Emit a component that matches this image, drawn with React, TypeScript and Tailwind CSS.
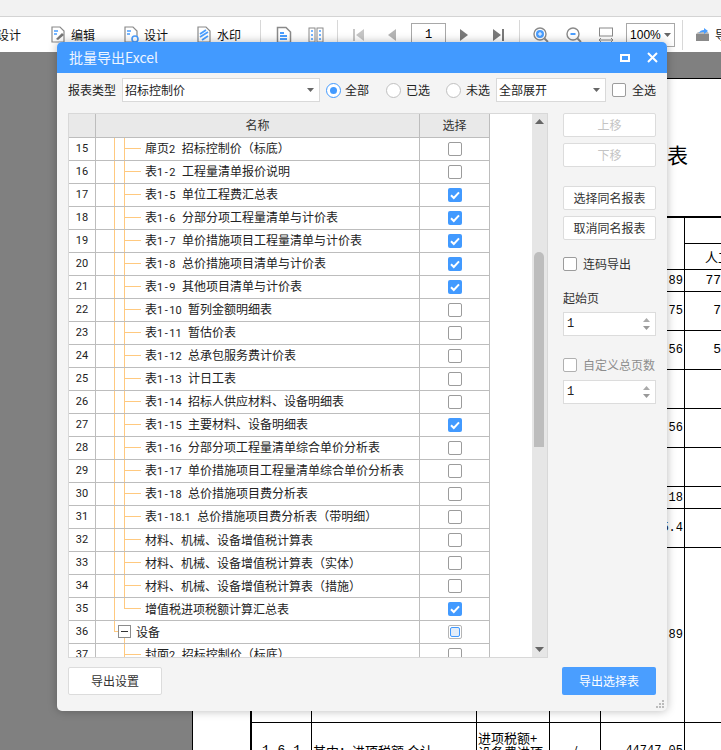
import React from "react";

function Mixed({ text }: { text: string }) {
  const parts = text.split(/([A-Za-z0-9.\-])/).filter(Boolean);
  return (
    <>
      {parts.map((p, i) =>
        p === "-" ? (
          <span key={i} className="inline-block w-[6px] text-center font-['Roboto',sans-serif] text-[11px]">-</span>
        ) : /^[A-Za-z0-9.]$/.test(p) ? (
          <span key={i} className="font-['Roboto',sans-serif] text-[11px]">{p}</span>
        ) : (
          <span key={i}>{p}</span>
        )
      )}
    </>
  );
}

function Check({ state = "off", disabled = false }: { state?: "off" | "on" | "mixed"; disabled?: boolean }) {
  if (state === "on")
    return (
      <div className="w-[14px] h-[14px] rounded-[2px] bg-[#429aff] flex items-center justify-center shrink-0">
        <svg width="12" height="12" viewBox="0 0 12 12"><path d="M2 6.2 L4.8 9 L10 3.4" fill="none" stroke="#fff" strokeWidth="2" /></svg>
      </div>
    );
  if (state === "mixed")
    return (
      <div className="w-[14px] h-[14px] rounded-[2px] border border-[#b5b5b5] bg-white flex items-center justify-center shrink-0">
        <div className="w-[10px] h-[10px] rounded-[2px] border border-[#429aff] bg-[#e3edf9]" />
      </div>
    );
  return <div className={`w-[14px] h-[14px] rounded-[2px] border bg-white shrink-0 ${disabled ? "border-[#b0b0b0]" : "border-[#9c9c9c]"}`} />;
}

function Radio({ on = false }: { on?: boolean }) {
  return (
    <div className={`w-[15px] h-[15px] rounded-full border flex items-center justify-center bg-white shrink-0 ${on ? "border-[#429aff]" : "border-[#c0c0c0]"}`}>
      {on && <div className="w-[7px] h-[7px] rounded-full bg-[#429aff]" />}
    </div>
  );
}

function Caret() {
  return <svg width="7" height="4" viewBox="0 0 7 4" className="shrink-0"><path d="M0 0 H7 L3.5 4 Z" fill="#666" /></svg>;
}

function Select({ w, text }: { w: string; text: string }) {
  return (
    <div className={`${w} h-[24px] border border-[#d9d9d9] bg-white flex items-center justify-between pl-[2px] pr-[5px] text-[12px] text-[#222]`}>
      <span>{text}</span>
      <Caret />
    </div>
  );
}

function Btn({ children, disabled = false }: { children: React.ReactNode; disabled?: boolean }) {
  return (
    <div className={`w-[93px] h-[24px] rounded-[2px] border border-[#dcdcdc] bg-white flex items-center justify-center text-[12px] ${disabled ? "text-[#c4c4c4]" : "text-[#333]"}`}>
      {children}
    </div>
  );
}

function Spin() {
  return (
    <div className="w-[93px] h-[24px] border border-[#dcdcdc] bg-white flex items-center justify-between pl-[3px] pr-[5px]">
      <span className="font-['Liberation_Mono',monospace] text-[12px] text-[#222]">1</span>
      <div className="flex flex-col gap-[4px]">
        <svg width="7" height="4" viewBox="0 0 7 4"><path d="M0 4 H7 L3.5 0 Z" fill="#aaa" /></svg>
        <svg width="7" height="4" viewBox="0 0 7 4"><path d="M0 0 H7 L3.5 4 Z" fill="#999" /></svg>
      </div>
    </div>
  );
}

type Row = { n: number; pre: string; name: string; c?: "on" | "mixed"; kind?: "last" | "group" | "after" };

const rows: Row[] = [
  { n: 15, pre: "扉页2", name: "招标控制价（标底）" },
  { n: 16, pre: "表1-2", name: "工程量清单报价说明" },
  { n: 17, pre: "表1-5", name: "单位工程费汇总表", c: "on" },
  { n: 18, pre: "表1-6", name: "分部分项工程量清单与计价表", c: "on" },
  { n: 19, pre: "表1-7", name: "单价措施项目工程量清单与计价表", c: "on" },
  { n: 20, pre: "表1-8", name: "总价措施项目清单与计价表", c: "on" },
  { n: 21, pre: "表1-9", name: "其他项目清单与计价表", c: "on" },
  { n: 22, pre: "表1-10", name: "暂列金额明细表" },
  { n: 23, pre: "表1-11", name: "暂估价表" },
  { n: 24, pre: "表1-12", name: "总承包服务费计价表" },
  { n: 25, pre: "表1-13", name: "计日工表" },
  { n: 26, pre: "表1-14", name: "招标人供应材料、设备明细表" },
  { n: 27, pre: "表1-15", name: "主要材料、设备明细表", c: "on" },
  { n: 28, pre: "表1-16", name: "分部分项工程量清单综合单价分析表" },
  { n: 29, pre: "表1-17", name: "单价措施项目工程量清单综合单价分析表" },
  { n: 30, pre: "表1-18", name: "总价措施项目费分析表" },
  { n: 31, pre: "表1-18.1", name: "总价措施项目费分析表（带明细）" },
  { n: 32, pre: "", name: "材料、机械、设备增值税计算表" },
  { n: 33, pre: "", name: "材料、机械、设备增值税计算表（实体）" },
  { n: 34, pre: "", name: "材料、机械、设备增值税计算表（措施）" },
  { n: 35, pre: "", name: "增值税进项税额计算汇总表", c: "on", kind: "last" },
  { n: 36, pre: "", name: "设备", c: "mixed", kind: "group" },
  { n: 37, pre: "封面2", name: "招标控制价（标底）", kind: "after" },
];

function Tree({ kind }: { kind?: Row["kind"] }) {
  if (kind === "group") {
    return (
      <div className="flex items-stretch h-full ml-[18px] shrink-0">
        <div className="w-[4px] shrink-0">
          <div className="h-[11px] border-l border-b border-[#ffc97f]" />
        </div>
        <div className="w-[13px] flex flex-col items-center shrink-0">
          <div className="w-[13px] h-[13px] mt-[4px] border border-[#8c8c8c] bg-white flex items-center justify-center shrink-0">
            <div className="w-[7px] h-px bg-[#333]" />
          </div>
          <div className="w-px flex-1 bg-[#ffc97f]" />
        </div>
      </div>
    );
  }
  return (
    <div className="flex items-stretch h-full ml-[18px] shrink-0">
      <div className={`w-[10px] ${kind === "after" ? "" : "border-l border-[#ffc97f]"}`} />
      <div className="w-[17px] flex flex-col">
        <div className="h-[11px] border-b border-l border-[#ffc97f]" />
        <div className={`flex-1 ${kind === "last" ? "" : "border-l border-[#ffc97f]"}`} />
      </div>
    </div>
  );
}

function ListRow({ r }: { r: Row }) {
  return (
    <div className="flex h-[23px] border-b border-[#bdbdbd] text-[12px] text-[#222] shrink-0">
      <div className="w-[27px] border-r border-[#bdbdbd] flex items-center justify-center font-['Roboto',sans-serif] text-[11px] shrink-0">{r.n}</div>
      <div className="w-[324px] border-r border-[#bdbdbd] flex items-center shrink-0 whitespace-nowrap">
        <Tree kind={r.kind} />
        {r.kind === "group" ? (
          <span className="ml-[5px]">{r.name}</span>
        ) : (
          <span className="ml-[4px] flex gap-[6.5px]">
            {r.pre && <span><Mixed text={r.pre} /></span>}
            <span>{r.name}</span>
          </span>
        )}
      </div>
      <div className="w-[70px] border-r border-[#bdbdbd] flex items-center justify-center shrink-0">
        <Check state={r.c ?? "off"} />
      </div>
    </div>
  );
}

const Doc = ({ d }: { d: string }) => (
  <svg width="16" height="18" viewBox="0 0 16 18" className="shrink-0">
    <path d="M1.5 1.5 H10 L14.5 6 V16.5 H1.5 Z" fill="#fff" stroke="#8a8a8a" strokeWidth="1.5" />
    <path d={d} fill="none" stroke="#4a9eff" strokeWidth="2" />
  </svg>
);

function ToolItem({ icon, label, ml }: { icon: React.ReactNode; label: string; ml: string }) {
  return (
    <div className={`flex items-center gap-[5px] shrink-0 ${ml}`}>
      {icon}
      <span className="text-[12px] text-[#111]">{label}</span>
    </div>
  );
}

const Sep = ({ ml }: { ml: string }) => <div className={`w-px h-[30px] bg-[#d8d8d8] shrink-0 ${ml}`} />;

const cols = ["w-[60px]", "w-[165px]", "w-[73px]", "w-[51px]", "w-[84px]"];

function TableRow({ h, cells, last }: { h: string; cells?: string[]; last?: string }) {
  return (
    <div className={`flex ${h} border-b border-black shrink-0`}>
      {cols.map((c, i) => (
        <div key={i} className={`${c} border-r border-black shrink-0 flex items-center justify-end pr-[1px] font-['Liberation_Mono',monospace] text-[12px] text-black`}>
          {i === 4 && cells?.[0]}
        </div>
      ))}
      <div className="flex-1 flex items-center">
        {last && <span className="w-[36px] text-right font-['Liberation_Mono',monospace] text-[13px] text-black">{last}</span>}
      </div>
    </div>
  );
}

export default function App() {
  return (
    <div className="relative w-[721px] h-[750px] overflow-hidden flex flex-col bg-[#808080] font-['Noto_Sans_CJK_SC',sans-serif]">
      {/* window strip */}
      <div className="h-[17px] bg-[#f2f2f2] border-b border-[#d4d4d4] shrink-0" />
      {/* toolbar */}
      <div className="h-[35px] bg-white flex items-center shrink-0 overflow-hidden">
        <span className="text-[12px] text-[#111] -ml-[3px] w-[24px] shrink-0">设计</span>
        <ToolItem ml="ml-[30px]" label="编辑" icon={
          <svg width="15" height="17" viewBox="0 0 15 17"><path d="M1 1 H9 L13 5 V16 H1 Z" fill="#fff" stroke="#8a8a8a" strokeWidth="1.2" /><path d="M3 5 H7 M3 8 H6" stroke="#4a9eff" strokeWidth="1.5" /><path d="M5 13 L11 7 L13 9 L7 14 Z" fill="#777" /></svg>
        } />
        <ToolItem ml="ml-[29px]" label="设计" icon={
          <svg width="15" height="17" viewBox="0 0 15 17"><path d="M1 1 H9 L13 5 V16 H1 Z" fill="#fff" stroke="#8a8a8a" strokeWidth="1.2" /><path d="M3 5 H7 M3 8 H6" stroke="#4a9eff" strokeWidth="1.5" /><circle cx="11" cy="13" r="3" fill="#fff" stroke="#4a9eff" strokeWidth="1.6" /></svg>
        } />
        <ToolItem ml="ml-[29px]" label="水印" icon={
          <svg width="15" height="17" viewBox="0 0 15 17"><path d="M1 1 H9 L13 5 V16 H1 Z" fill="#fff" stroke="#8a8a8a" strokeWidth="1.2" /><path d="M3 8 L9 4 M3 11 L11 6 M5 14 L11 10" stroke="#4a9eff" strokeWidth="1.8" /></svg>
        } />
        <Sep ml="ml-[19px]" />
        <div className="ml-[15px] shrink-0"><Doc d="M4 7 H8 M4 10 H11 M4 13 H11" /></div>
        <div className="ml-[16px] shrink-0">
          <svg width="16" height="16" viewBox="0 0 16 16"><rect x="1" y="1" width="6" height="14" fill="#fff" stroke="#8a8a8a" /><rect x="9" y="1" width="6" height="14" fill="#fff" stroke="#8a8a8a" /><path d="M3 4 H5 M3 8 H5 M3 12 H5 M11 4 H13 M11 8 H13 M11 12 H13" stroke="#4a9eff" strokeWidth="1.5" /></svg>
        </div>
        <Sep ml="ml-[13px]" />
        <div className="ml-[15px] shrink-0">
          <svg width="11" height="12" viewBox="0 0 11 12"><path d="M0 0 H2 V12 H0 Z M11 0 V12 L3 6 Z" fill="#c6c6c6" /></svg>
        </div>
        <div className="ml-[24px] shrink-0">
          <svg width="8" height="12" viewBox="0 0 8 12"><path d="M8 0 V12 L0 6 Z" fill="#b5b5b5" /></svg>
        </div>
        <div className="ml-[15px] w-[35px] h-[24px] border border-[#a8a8a8] flex items-center justify-center font-['Liberation_Mono',monospace] text-[12px] text-black shrink-0">1</div>
        <div className="ml-[14px] shrink-0">
          <svg width="8" height="12" viewBox="0 0 8 12"><path d="M0 0 V12 L8 6 Z" fill="#7a7a7a" /></svg>
        </div>
        <div className="ml-[25px] shrink-0">
          <svg width="11" height="12" viewBox="0 0 11 12"><path d="M0 0 V12 L8 6 Z M9 0 H11 V12 H9 Z" fill="#7a7a7a" /></svg>
        </div>
        <Sep ml="ml-[15px]" />
        <div className="ml-[13px] shrink-0">
          <svg width="16" height="16" viewBox="0 0 16 16"><circle cx="7" cy="7" r="6" fill="#fff" stroke="#8a8a8a" strokeWidth="1.4" /><circle cx="7" cy="7" r="4" fill="#4a9eff" /><path d="M5 7 H9 M7 5 V9" stroke="#fff" /><path d="M11.5 11.5 L15 15" stroke="#8a8a8a" strokeWidth="1.8" /></svg>
        </div>
        <div className="ml-[17px] shrink-0">
          <svg width="16" height="16" viewBox="0 0 16 16"><circle cx="7" cy="7" r="6" fill="#fff" stroke="#8a8a8a" strokeWidth="1.4" /><path d="M4.5 7 H9.5" stroke="#4a9eff" strokeWidth="2" /><path d="M11.5 11.5 L15 15" stroke="#8a8a8a" strokeWidth="1.8" /></svg>
        </div>
        <div className="ml-[16px] shrink-0">
          <svg width="16" height="16" viewBox="0 0 16 16"><rect x="1.5" y="1" width="13" height="8" fill="#fff" stroke="#8a8a8a" /><path d="M1 13 H15 M3 11 L1 13 L3 15 M13 11 L15 13 L13 15" fill="none" stroke="#8a8a8a" /></svg>
        </div>
        <div className="ml-[12px] w-[49px] h-[24px] border border-[#a8a8a8] flex items-center justify-between px-[3px] shrink-0">
          <span className="font-['Liberation_Sans',sans-serif] text-[12px] text-black">100%</span>
          <Caret />
        </div>
        <Sep ml="ml-[7px]" />
        <ToolItem ml="ml-[12px]" label="导" icon={
          <svg width="15" height="15" viewBox="0 0 15 15"><path d="M1 7 H14 V14 H1 Z" fill="#8a8a8a" /><path d="M1 7 L3 5 H13 L14 7" fill="#bbb" /><path d="M4 6 Q5 3 9 3 V1 L13 4 L9 7 V5 Q6 5 4 6" fill="#4a9eff" /></svg>
        } />
      </div>

      {/* workspace */}
      <div className="flex-1 flex min-h-0">
        <div className="w-[192px] shrink-0" />
        <div className="flex-1 flex flex-col min-w-0">
          <div className="h-[26px] shrink-0" />
          <div className="flex-1 bg-white border-l border-t border-black overflow-hidden">
            <div className="h-[62px] shrink-0" />
            <div className="h-[27px] pl-[474px] text-[21px] leading-[27px] text-black">表</div>
            <div className="h-[48px]" />
            <div className="ml-[57px] w-[620px] flex flex-col border-l-2 border-black">
              <div className="border-t-2 border-black flex h-[54px] border-b border-b-black shrink-0">
                {cols.map((c, i) => <div key={i} className={`${c} border-r border-black shrink-0`} />)}
                <div className="flex-1 flex flex-col">
                  <div className="h-[26px] border-b border-black" />
                  <div className="flex-1 pl-[20px] flex items-center whitespace-nowrap text-[13px] text-black">人工费</div>
                </div>
              </div>
              <TableRow h="h-[22px]" cells={["89"]} last="77" />
              <TableRow h="h-[39px]" cells={["75"]} last="7" />
              <TableRow h="h-[39px]" cells={["56"]} last="5" />
              <TableRow h="h-[39px]" />
              <TableRow h="h-[39px]" cells={["56"]} />
              <TableRow h="h-[39px]" />
              <TableRow h="h-[22px]" cells={["18"]} />
              <TableRow h="h-[39px]" cells={["45.4"]} />
              <TableRow h="h-[175px]" cells={["89"]} />
              <div className="flex h-[56px] text-[13px] leading-[14px] text-black">
                <div className={`${cols[0]} border-r border-black shrink-0 flex items-center justify-center font-['Liberation_Mono',monospace]`}>1.6.1</div>
                <div className={`${cols[1]} border-r border-black shrink-0 flex items-center pl-[1px] whitespace-nowrap`}>其中：进项税额 合计</div>
                <div className={`${cols[2]} border-r border-black shrink-0 pt-[8px] pl-[1px]`}>进项税额+<br />设备费进项</div>
                <div className={`${cols[3]} border-r border-black shrink-0 flex items-center justify-center`}>/</div>
                <div className={`${cols[4]} border-r border-black shrink-0 flex items-center justify-end pr-[1px] font-['Liberation_Mono',monospace] text-[12px]`}>44747.05</div>
              </div>
            </div>
          </div>
        </div>
      </div>

      {/* modal */}
      <div className="absolute left-[57px] top-[42px] w-[610px] h-[669px] rounded-[5px] bg-[#f4f4f4] shadow-[0_0_10px_rgba(0,0,0,0.28)] overflow-hidden flex flex-col">
        <div className="h-[31px] bg-[#429aff] flex items-center justify-between pl-[12px] pr-[9px] shrink-0">
          <span className="text-[14px] text-[#eef5ff]">批量导出Excel</span>
          <div className="flex items-center gap-[17px]">
            <div className="w-[10px] h-[8px] border-2 border-white" />
            <svg width="11" height="11" viewBox="0 0 11 11"><path d="M1 1 L10 10 M10 1 L1 10" stroke="#fff" strokeWidth="2" /></svg>
          </div>
        </div>
        <div className="flex-1 px-[11px] pt-[5px] flex flex-col min-h-0">
          <div className="flex items-center h-[24px] text-[12px] text-[#222] shrink-0">
            <span className="w-[54px] shrink-0">报表类型</span>
            <Select w="w-[198px]" text="招标控制价" />
            <div className="ml-[6px]"><Radio on /></div>
            <span className="ml-[4px]">全部</span>
            <div className="ml-[17px]"><Radio /></div>
            <span className="ml-[5px]">已选</span>
            <div className="ml-[16px]"><Radio /></div>
            <span className="ml-[5px]">未选</span>
            <div className="ml-[6px]"><Select w="w-[110px]" text="全部展开" /></div>
            <div className="ml-[6px]"><Check /></div>
            <span className="ml-[6px]">全选</span>
          </div>

          <div className="flex mt-[11px] shrink-0">
            <div className="w-[480px] h-[545px] border border-[#d8d8d8] bg-white flex overflow-hidden shrink-0">
              <div className="w-[421px] flex flex-col shrink-0 overflow-hidden">
                <div className="flex h-[24px] border-b border-[#bdbdbd] bg-[#e9e9e9] text-[12px] text-[#333] shrink-0">
                  <div className="w-[27px] border-r border-[#bdbdbd] shrink-0" />
                  <div className="w-[324px] border-r border-[#bdbdbd] flex items-center justify-center pb-[2px] shrink-0">名称</div>
                  <div className="w-[70px] border-r border-[#bdbdbd] flex items-center justify-center pb-[2px] shrink-0">选择</div>
                </div>
                {rows.map((r) => <ListRow key={r.n} r={r} />)}
              </div>
              <div className="w-[42px] shrink-0" />
              <div className="w-[15px] bg-[#e6e6e6] flex flex-col items-center justify-between py-[5px] shrink-0 relative">
                <svg width="9" height="5" viewBox="0 0 9 5"><path d="M0 5 H9 L4.5 0 Z" fill="#666" /></svg>
                <svg width="9" height="5" viewBox="0 0 9 5"><path d="M0 0 H9 L4.5 5 Z" fill="#666" /></svg>
                <div className="absolute left-[2px] top-[138px] w-[10px] h-[195px] rounded-t-[5px] bg-[#bdbdbd]" />
              </div>
            </div>
            <div className="ml-[15px] w-[93px] flex flex-col text-[12px] text-[#333] shrink-0">
              <Btn disabled>上移</Btn>
              <div className="mt-[6px]"><Btn disabled>下移</Btn></div>
              <div className="mt-[19px]"><Btn>选择同名报表</Btn></div>
              <div className="mt-[6px]"><Btn>取消同名报表</Btn></div>
              <div className="mt-[17px] flex items-center gap-[6px] h-[14px]"><Check /><span>连码导出</span></div>
              <div className="mt-[18px] h-[18px] flex items-center">起始页</div>
              <div className="mt-[5px]"><Spin /></div>
              <div className="mt-[22px] flex items-center gap-[6px] h-[14px]"><Check disabled /><span className="text-[#8d8d8d]">自定义总页数</span></div>
              <div className="mt-[8px]"><Spin /></div>
            </div>
          </div>

          <div className="flex justify-between mt-[9px] shrink-0">
            <div className="w-[94px] h-[28px] rounded-[2px] border border-[#dcdcdc] bg-white flex items-center justify-center text-[12px] text-[#333]">导出设置</div>
            <div className="w-[94px] h-[28px] rounded-[2px] bg-[#4a9eff] flex items-center justify-center text-[12px] text-white">导出选择表</div>
          </div>
        </div>
        {/* resize grip */}
        <svg width="8" height="8" viewBox="0 0 8 8" className="absolute right-[3px] bottom-[3px]">
          <path d="M6 0 H8 V2 H6 Z M3 3 H5 V5 H3 Z M6 3 H8 V5 H6 Z M0 6 H2 V8 H0 Z M3 6 H5 V8 H3 Z M6 6 H8 V8 H6 Z" fill="#bbb" />
        </svg>
      </div>
    </div>
  );
}
